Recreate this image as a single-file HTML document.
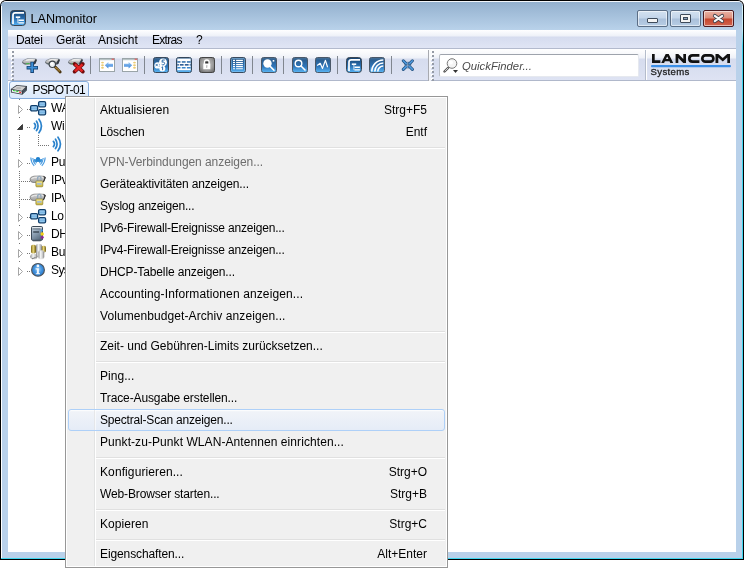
<!DOCTYPE html>
<html><head><meta charset="utf-8">
<style>
*{margin:0;padding:0;box-sizing:border-box}
html,body{will-change:transform;width:744px;height:568px;overflow:hidden;background:#fff;font-family:"Liberation Sans",sans-serif;position:relative}
.a{position:absolute}
.t{position:absolute;white-space:nowrap;color:#000;line-height:1}
#win{left:0;top:0;width:744px;height:560px;background:#000;border-radius:6px 6px 0 0}
#frame{left:1px;top:1px;width:742px;height:558px;border-radius:5px 5px 0 0;background:#b9d1ea;border-top:1px solid #f2f6fb}
#title{left:1px;top:2px;width:741px;height:28px;border-radius:4px 4px 0 0;background:linear-gradient(#93b0ce,#b9d2ea)}
#cyanb{left:1px;top:558px;width:742px;height:1px;background:#3fd6ef}
#cyanr{left:742px;top:6px;width:1px;height:553px;background:linear-gradient(#d8f4fb 0,#bfeefa 24px,#3fd6ef 40px)}
#menubar{left:8px;top:30px;width:728px;height:19px;background:linear-gradient(#ffffff 0,#f9fafd 2px,#eef1f8 6px,#d6dcef 7px,#dae0f1 12px,#e0e5f4 18px);border-bottom:1px solid #b3bacd}
#toolbar{left:8px;top:49px;width:728px;height:32px;background:linear-gradient(#ffffff 0,#f7f8fb 5px,#eef1f8 9px,#d6dcee 10px,#d9dff0 20px,#dee3f3 31px);border-bottom:1px solid #b0b8cb}
#tree{left:8px;top:81px;width:728px;height:471px;background:#fff}
.btn{position:absolute;top:10px;height:17px;border-radius:2px;border:1px solid #5b6e86;box-shadow:inset 0 0 0 1px rgba(255,255,255,.55)}
.mi{position:absolute;left:100px;font-size:12px;line-height:1;white-space:nowrap;color:#000}
.sc{position:absolute;font-size:12px;line-height:1;white-space:nowrap;color:#000;right:317px}
.sep{position:absolute;left:96px;width:349px;height:2px;border-top:1px solid #e0e0e0;border-bottom:1px solid #fff}
.tr{position:absolute;font-size:12px;letter-spacing:-0.3px;line-height:1;white-space:nowrap;color:#000;left:51px}
</style></head><body>
<div class="a" id="win"></div>
<div class="a" id="frame"></div>
<div class="a" id="title"></div>
<div class="a" id="cyanb"></div>
<div class="a" style="left:1px;top:6px;width:1px;height:552px;background:#fff"></div>
<div class="a" id="cyanr"></div>

<!-- app icon -->
<svg class="a" style="left:10px;top:10px" width="16" height="16" viewBox="0 0 16 16">
<defs><linearGradient id="ig" x1="0" y1="0" x2="0" y2="1"><stop offset="0" stop-color="#16406d"/><stop offset=".55" stop-color="#2a6fb0"/><stop offset="1" stop-color="#56b4f6"/></linearGradient></defs>
<rect x="0.5" y="0.5" width="15" height="15" rx="3" fill="url(#ig)" stroke="#3b4652"/>
<path d="M3 14V5Q3 2.8 5.2 2.8H14" stroke="#fff" stroke-width="1.7" fill="none"/>
<path d="M5.8 7.2H10.2" stroke="#fff" stroke-width="1.6"/><path d="M7.9 7.5V12.9H9M7.9 10.2H9" stroke="#dce9f5" stroke-width=".9" fill="none"/><path d="M9 10.2H13.9M9 12.9H13.9" stroke="#fff" stroke-width="1.4"/>
</svg>
<div class="t" style="left:30.5px;top:12.6px;font-size:12.6px">LANmonitor</div>

<!-- caption buttons -->
<div class="btn" style="left:637px;width:31px;background:linear-gradient(#d3e1f0 0,#c3d5ea 7px,#aac0da 8px,#b9cfe6 16px)"></div>
<div class="a" style="left:647px;top:18px;width:11px;height:5px;background:#f4f4f4;border:1px solid #3e4b5b;border-radius:1px"></div>
<div class="btn" style="left:670px;width:31px;background:linear-gradient(#d3e1f0 0,#c3d5ea 7px,#aac0da 8px,#b9cfe6 16px)"></div>
<div class="a" style="left:680px;top:14px;width:11px;height:9px;background:#f4f4f4;border:1px solid #3e4b5b;border-radius:1px"></div>
<div class="a" style="left:683px;top:17px;width:5px;height:3px;background:#8aa2ba;border:1px solid #3e4b5b"></div>
<div class="btn" style="left:703px;width:31px;border-color:#4a1a20;background:linear-gradient(#eab3a5 0,#dc8d7a 7px,#c5462d 8px,#d36a55 16px)"></div>
<svg class="a" style="left:712px;top:13px" width="13" height="11" viewBox="0 0 13 11">
<path d="M2.8 2.8L10.2 8.2M10.2 2.8L2.8 8.2" stroke="#3b3d48" stroke-width="3.8" stroke-linecap="round"/>
<path d="M2.8 2.8L10.2 8.2M10.2 2.8L2.8 8.2" stroke="#f6f6f6" stroke-width="2.2" stroke-linecap="round"/>
</svg>
<!-- menubar -->
<div class="a" id="menubar"></div>
<div class="t" style="left:16px;top:34px;font-size:12px;letter-spacing:-0.3px">Datei</div>
<div class="t" style="left:56px;top:34px;font-size:12px;letter-spacing:-0.2px">Gerät</div>
<div class="t" style="left:98px;top:34px;font-size:12px;letter-spacing:0.1px">Ansicht</div>
<div class="t" style="left:152px;top:34px;font-size:12px;letter-spacing:-0.7px">Extras</div>
<div class="t" style="left:196px;top:34px;font-size:12px">?</div>

<!-- toolbar -->
<div class="a" id="toolbar"></div>

<!-- toolbar 1 end / gap -->
<div class="a" style="left:428px;top:50px;width:1px;height:31px;background:#a8aab0"></div>
<div class="a" style="left:429px;top:49px;width:2px;height:32px;background:linear-gradient(#fbfcfd,#eef0f7)"></div>
<div class="a" style="left:645px;top:50px;width:1px;height:30px;background:#b4bccb"></div>
<div class="a" style="left:646px;top:50px;width:1px;height:30px;background:#fff"></div>
<!-- grips -->
<svg class="a" style="left:11px;top:50px" width="4" height="32" shape-rendering="crispEdges"><g fill="#fff"><rect x="0" y="0" width="2" height="2"/><rect x="0" y="4" width="2" height="2"/><rect x="0" y="8" width="2" height="2"/><rect x="0" y="12" width="2" height="2"/><rect x="0" y="16" width="2" height="2"/><rect x="0" y="20" width="2" height="2"/><rect x="0" y="24" width="2" height="2"/><rect x="0" y="28" width="2" height="2"/></g><g fill="#959ba6"><rect x="1" y="1" width="2" height="2"/><rect x="1" y="5" width="2" height="2"/><rect x="1" y="9" width="2" height="2"/><rect x="1" y="13" width="2" height="2"/><rect x="1" y="17" width="2" height="2"/><rect x="1" y="21" width="2" height="2"/><rect x="1" y="25" width="2" height="2"/><rect x="1" y="29" width="2" height="2"/></g></svg>
<svg class="a" style="left:431px;top:50px" width="4" height="32" shape-rendering="crispEdges"><g fill="#fff"><rect x="0" y="0" width="2" height="2"/><rect x="0" y="4" width="2" height="2"/><rect x="0" y="8" width="2" height="2"/><rect x="0" y="12" width="2" height="2"/><rect x="0" y="16" width="2" height="2"/><rect x="0" y="20" width="2" height="2"/><rect x="0" y="24" width="2" height="2"/><rect x="0" y="28" width="2" height="2"/></g><g fill="#959ba6"><rect x="1" y="1" width="2" height="2"/><rect x="1" y="5" width="2" height="2"/><rect x="1" y="9" width="2" height="2"/><rect x="1" y="13" width="2" height="2"/><rect x="1" y="17" width="2" height="2"/><rect x="1" y="21" width="2" height="2"/><rect x="1" y="25" width="2" height="2"/><rect x="1" y="29" width="2" height="2"/></g></svg>
<!-- separators -->
<div class="a" style="left:90px;top:56px;width:1px;height:18px;background:#80868f"></div>
<div class="a" style="left:144px;top:56px;width:1px;height:18px;background:#80868f"></div>
<div class="a" style="left:221px;top:56px;width:1px;height:18px;background:#80868f"></div>
<div class="a" style="left:252px;top:56px;width:1px;height:18px;background:#80868f"></div>
<div class="a" style="left:283px;top:56px;width:1px;height:18px;background:#80868f"></div>
<div class="a" style="left:337px;top:56px;width:1px;height:18px;background:#80868f"></div>
<div class="a" style="left:391px;top:56px;width:1px;height:18px;background:#80868f"></div>

<svg width="0" height="0" style="position:absolute"><defs>
<linearGradient id="bg" x1="0" y1="0" x2="0" y2="1"><stop offset="0" stop-color="#4a7196"/><stop offset=".18" stop-color="#2b5f92"/><stop offset=".6" stop-color="#2f76ba"/><stop offset="1" stop-color="#5cb8f6"/></linearGradient>
<linearGradient id="gg" x1="0" y1="0" x2="0" y2="1"><stop offset="0" stop-color="#8a8a8a"/><stop offset=".5" stop-color="#6c6c6c"/><stop offset="1" stop-color="#9a9a9a"/></linearGradient>
<linearGradient id="lkd" x1="0" y1="0" x2="0" y2="1"><stop offset="0" stop-color="#dcdcdc"/><stop offset="1" stop-color="#9c9c9c"/></linearGradient><linearGradient id="lky" x1="0" y1="0" x2="0" y2="1"><stop offset="0" stop-color="#f6eea0"/><stop offset="1" stop-color="#c9b336"/></linearGradient>
<linearGradient id="dev" x1="0" y1="0" x2="0" y2="1"><stop offset="0" stop-color="#e6e6e6"/><stop offset="1" stop-color="#a9a9a9"/></linearGradient>
</defs></svg>

<!-- icon 1: device + plus -->
<svg class="a" style="left:20px;top:55px" width="20" height="20" viewBox="0 0 20 20">
<path d="M2 7Q2.3 5 7.4 3.2L15.5 3.5Q17.3 3.8 16.9 5L15.6 8.5Q15 9.4 13 9.5L6 9.7Q2 9.4 2 7Z" fill="#8e959c"/>
<path d="M3 6.6Q3.8 5 7.9 4L15.2 4.2Q16.1 4.4 15.5 5.3L13.4 7.8L5.2 8.3Q3 8 3 6.6Z" fill="url(#dev)"/>
<path d="M6 5.3Q9 4.6 13.5 4.9" stroke="#fafafa" stroke-width=".8" fill="none"/>
<path d="M15.6 4L16.9 5L15.6 8.5Q15 9.4 13 9.5L13.4 7.8Z" fill="#343a42"/>
<path d="M2.5 7.2Q3 8.8 6 9" stroke="#4d545c" stroke-width=".7" fill="none"/>
<path d="M5.8 8.8L9.5 8.6" stroke="#34b834" stroke-width=".9"/>
<path d="M6.6 12.7H18M12.15 6.8V17.9" stroke="#174575" stroke-width="3.6"/>
<path d="M7.4 12.7H17.2M12.15 7.6V17.1" stroke="#3d8fd8" stroke-width="1.8"/>
</svg>
<!-- icon 2: device + magnifier -->
<svg class="a" style="left:43px;top:55px" width="20" height="20" viewBox="0 0 20 20">
<path d="M2 7Q2.3 5 7.4 3.2L15.5 3.5Q17.3 3.8 16.9 5L15.6 8.5Q15 9.4 13 9.5L6 9.7Q2 9.4 2 7Z" fill="#8e959c"/>
<path d="M3 6.6Q3.8 5 7.9 4L15.2 4.2Q16.1 4.4 15.5 5.3L13.4 7.8L5.2 8.3Q3 8 3 6.6Z" fill="url(#dev)"/>
<path d="M6 5.3Q9 4.6 13.5 4.9" stroke="#fafafa" stroke-width=".8" fill="none"/>
<path d="M15.6 4L16.9 5L15.6 8.5Q15 9.4 13 9.5L13.4 7.8Z" fill="#343a42"/>
<path d="M2.5 7.2Q3 8.8 6 9" stroke="#4d545c" stroke-width=".7" fill="none"/>
<path d="M5.8 8.8L9.5 8.6" stroke="#34b834" stroke-width=".9"/>
<path d="M12.3 12L17.2 17" stroke="#4a3410" stroke-width="2.8" stroke-linecap="round"/>
<path d="M12.5 12.2L17 16.8" stroke="#d8a848" stroke-width="1.4" stroke-dasharray="1 .6"/>
<circle cx="9.3" cy="9.3" r="3.2" fill="#eef2f5" stroke="#3c4248" stroke-width="1.2"/>
<circle cx="8.8" cy="8.7" r="1.3" fill="#fff"/>
</svg>
<!-- icon 3: device + red x -->
<svg class="a" style="left:66px;top:55px" width="20" height="20" viewBox="0 0 20 20">
<path d="M2 7Q2.3 5 7.4 3.2L15.5 3.5Q17.3 3.8 16.9 5L15.6 8.5Q15 9.4 13 9.5L6 9.7Q2 9.4 2 7Z" fill="#8e959c"/>
<path d="M3 6.6Q3.8 5 7.9 4L15.2 4.2Q16.1 4.4 15.5 5.3L13.4 7.8L5.2 8.3Q3 8 3 6.6Z" fill="url(#dev)"/>
<path d="M6 5.3Q9 4.6 13.5 4.9" stroke="#fafafa" stroke-width=".8" fill="none"/>
<path d="M15.6 4L16.9 5L15.6 8.5Q15 9.4 13 9.5L13.4 7.8Z" fill="#343a42"/>
<path d="M2.5 7.2Q3 8.8 6 9" stroke="#4d545c" stroke-width=".7" fill="none"/>
<path d="M5.8 8.8L9.5 8.6" stroke="#34b834" stroke-width=".9"/>
<path d="M8.6 9L16.8 16.6M16.8 9L8.6 16.6" stroke="#6d0c0c" stroke-width="3.8" stroke-linecap="round"/>
<path d="M8.9 9.3L16.5 16.3M16.5 9.3L8.9 16.3" stroke="#e52424" stroke-width="2.3"/>
</svg>
<!-- icon 4: window arrow left -->
<svg class="a" style="left:99px;top:58px" width="16" height="14" viewBox="0 0 16 14">
<defs><linearGradient id="arr" x1="0" y1="0" x2="0" y2="1"><stop offset="0" stop-color="#9ccaf6"/><stop offset="1" stop-color="#3a82d8"/></linearGradient></defs>
<rect x="0.5" y="0.5" width="15" height="13" fill="#fff" stroke="#9aa4a8"/>
<rect x="1" y="1" width="14" height="1.2" fill="#b8c4c6"/>
<rect x="12.6" y="0.6" width="2.6" height="1.3" fill="#dd6a6a"/>
<ellipse cx="3.5" cy="4.6" rx="1.4" ry=".95" fill="#ebcb74"/><ellipse cx="3.5" cy="7.2" rx="1.4" ry=".95" fill="#ebcb74"/><ellipse cx="3.5" cy="9.8" rx="1.4" ry=".95" fill="#ebcb74"/>
<path d="M5.8 7.2L9.4 4V5.7H14V8.7H9.4V10.4Z" fill="url(#arr)"/>
</svg>
<!-- icon 5: window arrow right -->
<svg class="a" style="left:122px;top:58px" width="16" height="14" viewBox="0 0 16 14">
<rect x="0.5" y="0.5" width="15" height="13" fill="#fff" stroke="#9aa4a8"/>
<rect x="1" y="1" width="14" height="1.2" fill="#b8c4c6"/>
<rect x="12.6" y="0.6" width="2.6" height="1.3" fill="#dd6a6a"/>
<ellipse cx="12.5" cy="4.6" rx="1.4" ry=".95" fill="#ebcb74"/><ellipse cx="12.5" cy="7.2" rx="1.4" ry=".95" fill="#ebcb74"/><ellipse cx="12.5" cy="9.8" rx="1.4" ry=".95" fill="#ebcb74"/>
<path d="M10.2 7.2L6.6 4V5.7H2V8.7H6.6V10.4Z" fill="url(#arr)"/>
</svg>
<!-- icon 6: numbers -->
<svg class="a" style="left:153px;top:57px" width="16" height="16" viewBox="0 0 16 16">
<rect x="0.5" y="0.5" width="15" height="15" rx="2" fill="url(#bg)" stroke="#3a4a5c"/>
<circle cx="10" cy="5.3" r="3.9" fill="#fff"/><circle cx="4.6" cy="8.4" r="3.2" fill="#fff"/><circle cx="9.3" cy="11.4" r="3" fill="#fff"/><path d="M5 6.5L9 5L11 9.5L7 11Z" fill="#fff"/>
<path d="M11.8 3H9.3L9 5.3Q9.6 4.9 10.3 5Q11.7 5.2 11.6 6.5Q11.5 7.9 10 7.9Q9.2 7.9 8.7 7.4" stroke="#2466a8" stroke-width=".95" fill="none"/>
<path d="M8.5 10.4L9.6 9.8V13.2" stroke="#2466a8" stroke-width=".95" fill="none"/>
<path d="M2.6 6.8L4.8 9.2M4.8 6.8L2.6 9.2" stroke="#2466a8" stroke-width=".8"/>
<circle cx="6.3" cy="7.2" r=".45" fill="#2466a8"/><circle cx="6.3" cy="9" r=".45" fill="#2466a8"/>
</svg>
<!-- icon 7: firewall -->
<svg class="a" style="left:176px;top:57px" width="16" height="16" viewBox="0 0 16 16">
<rect x="0.5" y="0.5" width="15" height="15" rx="2" fill="url(#bg)" stroke="#34475a"/>
<rect x="1.3" y="1.6" width="13.4" height="11.6" fill="#fff"/>
<g fill="#2c6aa8"><rect x="1.3" y="4.2" width="3.2" height="1.5"/><rect x="5.8" y="4.2" width="3.8" height="1.5"/><rect x="10.9" y="4.2" width="3.8" height="1.5"/>
<rect x="1.3" y="7.1" width="1.5" height="1.5" fill="#1a4f8c"/><rect x="3.8" y="7.1" width="3.8" height="1.5" fill="#1a4f8c"/><rect x="8.8" y="7.1" width="3.8" height="1.5" fill="#1a4f8c"/><rect x="13.7" y="7.1" width="1" height="1.5" fill="#1a4f8c"/>
<rect x="1.3" y="10" width="3.2" height="1.5" fill="#3a86cc"/><rect x="5.8" y="10" width="3.8" height="1.5" fill="#3a86cc"/><rect x="10.9" y="10" width="3.8" height="1.5" fill="#3a86cc"/></g>
</svg>
<!-- icon 8: lock -->
<svg class="a" style="left:199px;top:57px" width="16" height="16" viewBox="0 0 16 16">
<defs><radialGradient id="gg2" cx=".5" cy=".45" r=".7"><stop offset="0" stop-color="#c8c8c8"/><stop offset=".6" stop-color="#9a9a9a"/><stop offset="1" stop-color="#5e5e5e"/></radialGradient></defs>
<rect x="0.5" y="0.5" width="15" height="15" rx="2" fill="url(#gg2)" stroke="#454545"/>
<path d="M5.6 7V5.3Q5.6 3.1 7.8 3.1Q10 3.1 10 5.3V7" stroke="#fff" stroke-width="1.5" fill="none"/>
<rect x="6.3" y="4.5" width="3" height="2.3" fill="#333"/>
<rect x="4.3" y="6.6" width="7" height="5.6" fill="#fff"/>
<path d="M7.4 8.3H8.3L8.1 11H7.6Z" fill="#888"/>
</svg>
<!-- icon 9: list -->
<svg class="a" style="left:230px;top:57px" width="16" height="16" viewBox="0 0 16 16">
<rect x="0.5" y="0.5" width="15" height="15" rx="2" fill="url(#bg)" stroke="#3a4a5c"/>
<rect x="1.5" y="1.5" width="13" height="13" rx="1" fill="none" stroke="#8cc4ee" stroke-opacity=".5"/>
<g fill="#fff"><rect x="3" y="2.8" width="2" height="1.2"/><rect x="3" y="4.9" width="2" height="1.2"/><rect x="3" y="7" width="2" height="1.2"/><rect x="3" y="9" width="2" height="1.2"/><rect x="3" y="11.1" width="2" height="1.2" opacity=".8"/>
<rect x="6.1" y="2.8" width="6.8" height="1.2"/><rect x="6.1" y="4.9" width="6.8" height="1.2"/><rect x="6.1" y="7" width="6.8" height="1.2"/><rect x="6.1" y="9" width="6.8" height="1.2"/><rect x="6.1" y="11.1" width="6.8" height="1.2" opacity=".8"/></g>
</svg>
<!-- icon 10: magnifier filled -->
<svg class="a" style="left:261px;top:57px" width="16" height="16" viewBox="0 0 16 16">
<rect x="0.5" y="0.5" width="15" height="15" rx="2" fill="url(#bg)" stroke="#4a5868"/>
<path d="M9.4 9.6L13 13.3" stroke="#fff" stroke-width="1.6" stroke-linecap="round"/>
<circle cx="6.5" cy="6.5" r="4.2" fill="#fff"/>
<rect x="11.7" y="3" width="1.6" height="1.6" fill="#fff"/>
</svg>
<!-- icon 11: search -->
<svg class="a" style="left:292px;top:57px" width="16" height="16" viewBox="0 0 16 16">
<rect x="0.5" y="0.5" width="15" height="15" rx="2" fill="url(#bg)" stroke="#4a5868"/>
<circle cx="6.5" cy="6.5" r="3.3" fill="none" stroke="#fff" stroke-width="1.4"/>
<path d="M9 9L13 13" stroke="#fff" stroke-width="1.6" stroke-linecap="round"/>
</svg>
<!-- icon 12: wave -->
<svg class="a" style="left:315px;top:57px" width="16" height="16" viewBox="0 0 16 16">
<rect x="0.5" y="0.5" width="15" height="15" rx="2" fill="url(#bg)" stroke="#4a5868"/>
<path d="M2.2 8.6L5.2 6.3L7.5 11.4L10.4 3.4L12.6 10.2" stroke="#fff" stroke-width="1.2" fill="none" stroke-linejoin="round"/>
</svg>
<!-- icon 13: app -->
<svg class="a" style="left:346px;top:57px" width="16" height="16" viewBox="0 0 16 16">
<rect x="0.5" y="0.5" width="15" height="15" rx="3" fill="url(#ig)" stroke="#3b4652"/>
<path d="M3 14V5Q3 2.8 5.2 2.8H14" stroke="#fff" stroke-width="1.7" fill="none"/>
<path d="M5.8 7.2H10.2" stroke="#fff" stroke-width="1.6"/><path d="M7.9 7.5V12.9H9M7.9 10.2H9" stroke="#dce9f5" stroke-width=".9" fill="none"/><path d="M9 10.2H13.9M9 12.9H13.9" stroke="#fff" stroke-width="1.4"/>
</svg>
<!-- icon 14: wifi arcs -->
<svg class="a" style="left:369px;top:57px" width="16" height="16" viewBox="0 0 16 16">
<rect x="0.5" y="0.5" width="15" height="15" rx="2" fill="url(#bg)" stroke="#4a5868"/>
<path d="M2.8 14.5A11.5 11.5 0 0 1 14.3 3M5.8 14.5A8.5 8.5 0 0 1 14.3 6M8.8 14.5A5.5 5.5 0 0 1 14.3 9" stroke="#fff" stroke-width="1.6" fill="none"/>
</svg>
<!-- icon 15: collapse X -->
<svg class="a" style="left:401px;top:59px" width="14" height="13" viewBox="0 0 14 13">
<g stroke="#25527e" stroke-width="3" stroke-linecap="round"><path d="M2.3 1.8L4.6 4.1M11.4 1.8L9.1 4.1M2.3 10.4L4.6 8.1M11.4 10.4L9.1 8.1"/></g>
<g fill="#25527e"><path d="M6.6 5.9L3.2 5.7L6.4 2.5Z"/><path d="M7.1 5.9L10.5 5.7L7.3 2.5Z"/><path d="M6.6 6.3L3.2 6.5L6.4 9.7Z"/><path d="M7.1 6.3L10.5 6.5L7.3 9.7Z"/></g>
<g stroke="#4f9be0" stroke-width="1.5" stroke-linecap="round"><path d="M2.3 1.8L4.8 4.3M11.4 1.8L8.9 4.3M2.3 10.4L4.8 7.9M11.4 10.4L8.9 7.9"/></g>
<g fill="#4f9be0"><path d="M6.2 5.5L4.2 5.3L6 3.5Z"/><path d="M7.5 5.5L9.5 5.3L7.7 3.5Z"/><path d="M6.2 6.7L4.2 6.9L6 8.7Z"/><path d="M7.5 6.7L9.5 6.9L7.7 8.7Z"/></g>
</svg>
<!-- search box -->
<div class="a" style="left:439px;top:54px;width:200px;height:23px;background:#fff;border:1px solid #b9bec6;border-top-color:#9ea3ac;border-radius:2px;border-right-color:#e6e9ef;border-bottom-color:#e6e9ef"></div>
<svg class="a" style="left:443px;top:57px" width="18" height="18" viewBox="0 0 18 18">
<path d="M5 11L1.5 14.5" stroke="#555" stroke-width="2.4" stroke-linecap="round"/>
<path d="M5 11L1.8 14.2" stroke="#cfcfcf" stroke-width="1"/>
<circle cx="9" cy="6.5" r="4.8" fill="#f4f4f4" stroke="#7a7a7a" stroke-width="1"/>
<circle cx="8" cy="5.5" r="2" fill="#fff"/>
<path d="M10 13H15L12.5 16Z" fill="#333"/>
</svg>
<div class="t" style="left:462px;top:61px;font-size:11.3px;font-style:italic;color:#4a4a4a">QuickFinder...</div>

<!-- logo -->
<svg class="a" style="left:651px;top:53px" width="80" height="15" viewBox="0 0 80 15">
<g fill="#111">
<path d="M1 1H3.7V7.3H9.4V10H1Z"/>
<path fill-rule="evenodd" d="M10.2 10L14.7 1H17.7L22.2 10H19.3L18.5 8.3H13.9L13.1 10ZM15 5.9H17.4L16.2 3.4Z"/>
<path d="M24.6 10V1H27.3L32.3 6.1V1H35V10H32.3L27.3 4.9V10Z"/>
<path d="M64.5 10V1H67.3L71.75 4.9L76.2 1H79V10H76.3V4.6L71.75 8.4L67.3 4.6V10Z"/>
</g>
<g fill="none" stroke="#111" stroke-width="2.7">
<path d="M48.4 2.35H41.6Q38.35 2.35 38.35 5.5Q38.35 8.65 41.6 8.65H48.4"/>
<rect x="51.35" y="2.35" width="11" height="6.3" rx="3"/>
</g>
<rect x="0" y="12" width="80" height="2.2" rx="1" fill="#3c8fe8"/>
</svg>
<div class="t" style="left:650.5px;top:67px;font-size:9.6px;color:#222;-webkit-text-stroke:0.3px #222;letter-spacing:0.35px">Systems</div>


<!-- tree -->
<div class="a" id="tree"></div>
<!-- selection -->
<div class="a" style="left:9px;top:81px;width:80px;height:18px;border:1px solid #84acdd;border-radius:3px;background:linear-gradient(#f1f7fe,#dbe9fb)"></div>
<!-- PSPOT device icon -->
<svg class="a" style="left:9px;top:82px" width="20" height="16" viewBox="0 0 20 16">
<path d="M1.8 7L7.5 3L18 4L17.8 8.6L13.3 12.8L1.9 10.6Z" fill="#343a42"/>
<path d="M2.9 7.1L7.9 3.8L16.9 4.7L12.9 8.8Z" fill="#d2d2d2"/>
<ellipse cx="9.6" cy="6.2" rx="2.6" ry="1.1" fill="#b9b9b9"/>
<path d="M2.8 7.7L12.8 9.4V11.8L2.8 9.9Z" fill="#e9ecef"/>
<path d="M4 8L6.2 8.4V9.3L4 8.9Z" fill="#1fd61f"/>
<path d="M6.9 8.7L9.3 9.1V10L6.9 9.6Z" fill="#1fd61f"/>
<path d="M10 9.6L12.1 10V10.9L10 10.5Z" fill="#ee1010"/>
<path d="M13.8 9.5L16.5 7M14 11L17 8.4" stroke="#6d8aa4" stroke-width=".5"/>
</svg>
<div class="t" style="left:32.5px;top:83.6px;font-size:12px;letter-spacing:-0.6px">PSPOT-01</div>

<!-- tree lines -->
<svg class="a" style="left:8px;top:98px" width="60" height="180" shape-rendering="crispEdges">
<g fill="#747474">
<rect x="11" y="1" width="1" height="1"/>
<rect x="11" y="19" width="1" height="1"/>
<rect x="11" y="37" width="1" height="1"/>
<rect x="11" y="39" width="1" height="1"/>
<rect x="11" y="41" width="1" height="1"/>
<rect x="11" y="43" width="1" height="1"/>
<rect x="11" y="45" width="1" height="1"/>
<rect x="11" y="47" width="1" height="1"/>
<rect x="11" y="49" width="1" height="1"/>
<rect x="11" y="51" width="1" height="1"/>
<rect x="11" y="53" width="1" height="1"/>
<rect x="11" y="55" width="1" height="1"/>
<rect x="11" y="73" width="1" height="1"/>
<rect x="11" y="75" width="1" height="1"/>
<rect x="11" y="77" width="1" height="1"/>
<rect x="11" y="79" width="1" height="1"/>
<rect x="11" y="81" width="1" height="1"/>
<rect x="11" y="83" width="1" height="1"/>
<rect x="11" y="85" width="1" height="1"/>
<rect x="11" y="87" width="1" height="1"/>
<rect x="11" y="89" width="1" height="1"/>
<rect x="11" y="91" width="1" height="1"/>
<rect x="11" y="93" width="1" height="1"/>
<rect x="11" y="95" width="1" height="1"/>
<rect x="11" y="97" width="1" height="1"/>
<rect x="11" y="99" width="1" height="1"/>
<rect x="11" y="101" width="1" height="1"/>
<rect x="11" y="103" width="1" height="1"/>
<rect x="11" y="105" width="1" height="1"/>
<rect x="11" y="107" width="1" height="1"/>
<rect x="11" y="109" width="1" height="1"/>
<rect x="11" y="127" width="1" height="1"/>
<rect x="11" y="145" width="1" height="1"/>
<rect x="11" y="163" width="1" height="1"/>
<rect x="19" y="11" width="1" height="1"/>
<rect x="21" y="11" width="1" height="1"/>
<rect x="19" y="29" width="1" height="1"/>
<rect x="21" y="29" width="1" height="1"/>
<rect x="19" y="65" width="1" height="1"/>
<rect x="21" y="65" width="1" height="1"/>
<rect x="19" y="119" width="1" height="1"/>
<rect x="21" y="119" width="1" height="1"/>
<rect x="19" y="137" width="1" height="1"/>
<rect x="21" y="137" width="1" height="1"/>
<rect x="19" y="155" width="1" height="1"/>
<rect x="21" y="155" width="1" height="1"/>
<rect x="19" y="173" width="1" height="1"/>
<rect x="21" y="173" width="1" height="1"/>
<rect x="11" y="83" width="1" height="1"/>
<rect x="13" y="83" width="1" height="1"/>
<rect x="15" y="83" width="1" height="1"/>
<rect x="17" y="83" width="1" height="1"/>
<rect x="19" y="83" width="1" height="1"/>
<rect x="21" y="83" width="1" height="1"/>
<rect x="11" y="101" width="1" height="1"/>
<rect x="13" y="101" width="1" height="1"/>
<rect x="15" y="101" width="1" height="1"/>
<rect x="17" y="101" width="1" height="1"/>
<rect x="19" y="101" width="1" height="1"/>
<rect x="21" y="101" width="1" height="1"/>
<rect x="30" y="37" width="1" height="1"/>
<rect x="30" y="39" width="1" height="1"/>
<rect x="30" y="41" width="1" height="1"/>
<rect x="30" y="43" width="1" height="1"/>
<rect x="30" y="45" width="1" height="1"/>
<rect x="30" y="47" width="1" height="1"/>
<rect x="32" y="47" width="1" height="1"/>
<rect x="34" y="47" width="1" height="1"/>
<rect x="36" y="47" width="1" height="1"/>
<rect x="38" y="47" width="1" height="1"/>
<rect x="40" y="47" width="1" height="1"/></g><path d="M10.5 7.5V15.5L14.5 11.5Z" fill="#fff" stroke="#a6a6a6" stroke-width="1" shape-rendering="auto"/><path d="M10.5 61.5V69.5L14.5 65.5Z" fill="#fff" stroke="#a6a6a6" stroke-width="1" shape-rendering="auto"/><path d="M10.5 115.5V123.5L14.5 119.5Z" fill="#fff" stroke="#a6a6a6" stroke-width="1" shape-rendering="auto"/><path d="M10.5 133.5V141.5L14.5 137.5Z" fill="#fff" stroke="#a6a6a6" stroke-width="1" shape-rendering="auto"/><path d="M10.5 151.5V159.5L14.5 155.5Z" fill="#fff" stroke="#a6a6a6" stroke-width="1" shape-rendering="auto"/><path d="M10.5 169.5V177.5L14.5 173.5Z" fill="#fff" stroke="#a6a6a6" stroke-width="1" shape-rendering="auto"/><path d="M9.5 31.5H14.5V26.5Z" fill="#3c3c3c" stroke="#262626" stroke-width=".8" shape-rendering="auto"/></svg>
<!-- WAN network icon -->
<svg class="a" style="left:29px;top:100px" width="18" height="16" viewBox="0 0 18 16">
<defs><linearGradient id="nb" x1="0" y1="0" x2="0" y2="1"><stop offset="0" stop-color="#a6d4f6"/><stop offset=".6" stop-color="#7ab4e2"/><stop offset=".85" stop-color="#9fd4f4"/><stop offset="1" stop-color="#d2f4ff"/></linearGradient></defs>
<rect x="1.6" y="5.6" width="7" height="5.2" rx="1.3" fill="url(#nb)" stroke="#0f3e6c" stroke-width="1.3"/>
<rect x="9.6" y="1.6" width="7" height="5.2" rx="1.3" fill="url(#nb)" stroke="#0f3e6c" stroke-width="1.3"/>
<rect x="9.6" y="9.6" width="7" height="5.2" rx="1.3" fill="url(#nb)" stroke="#0f3e6c" stroke-width="1.3"/>
</svg>
<div class="tr" style="top:102px">WAN-Verbindungen</div>
<!-- wifi icon -->
<svg class="a" style="left:32px;top:118px" width="12" height="16" viewBox="0 0 12 16">
<path d="M2.4 5.4Q4.6 8 2.4 10.6M4.5 3.2Q7.6 8 4.5 12.6M7 1.2Q11.9 8 7 14.8" stroke="#2a82cc" stroke-width="1.7" fill="none" stroke-linecap="round"/>
</svg>
<div class="tr" style="top:120px">Wireless LAN</div>
<svg class="a" style="left:51px;top:136px" width="12" height="16" viewBox="0 0 12 16">
<path d="M2.4 5.4Q4.6 8 2.4 10.6M4.5 3.2Q7.6 8 4.5 12.6M7 1.2Q11.9 8 7 14.8" stroke="#2a82cc" stroke-width="1.7" fill="none" stroke-linecap="round"/>
</svg>
<!-- public spot -->
<svg class="a" style="left:28px;top:154px" width="20" height="16" viewBox="0 0 20 16">
<g fill="none" stroke="#4a9be0" stroke-width="1.1">
<path d="M2.8 3.5Q3 8.5 6.2 12"/><path d="M4.8 4Q5 7.8 7.6 10.6"/><path d="M6.6 5Q7 7.5 8.6 9"/>
<path d="M17.2 3.5Q17 8.5 13.8 12"/><path d="M15.2 4Q15 7.8 12.4 10.6"/><path d="M13.4 5Q13 7.5 11.4 9"/>
</g>
<path d="M7.8 7.8V5.2Q7.8 3 10 3Q12.2 3 12.2 5.2V7.8Z" fill="#1f7fcc"/>
<path d="M6 5.3H14V7.8H6Z" fill="#2a88d2" opacity=".8"/>
</svg>
<div class="tr" style="top:156px">Public Spot</div>
<!-- IPv locks -->
<svg class="a" style="left:28px;top:172px" width="20" height="18" viewBox="0 0 20 18">
<path d="M2 7Q2.3 4.8 6 4.2L12 4Q17 4 17.2 5.5L16 8.8Q15 10.3 12 10.5L5 10.5Q2 10.2 2 7Z" fill="url(#lkd)" stroke="#6f6f6f" stroke-width=".7"/>
<path d="M3.5 6.5Q6 5 11 5Q14 5 16 5.5" stroke="#f2f2f2" stroke-width=".9" fill="none"/>
<path d="M15.5 4.5L17.2 5.5L16 8.8Q15 10.3 13 10.5" stroke="#333" stroke-width="1.2" fill="none"/>
<path d="M9.6 9.5V6.6Q9.6 4.4 11.3 4.4Q13 4.4 13 6.6V9.5" stroke="#93a8bb" stroke-width="1.3" fill="none"/>
<rect x="7.9" y="9" width="6.9" height="5.8" rx=".8" fill="url(#lky)" stroke="#8d7d25" stroke-width=".7"/>
<rect x="9" y="11" width="4.6" height="1.8" rx=".6" fill="#a5bcd2"/>
</svg>
<div class="tr" style="top:174px">IPv4</div>
<svg class="a" style="left:28px;top:190px" width="20" height="18" viewBox="0 0 20 18">
<path d="M2 7Q2.3 4.8 6 4.2L12 4Q17 4 17.2 5.5L16 8.8Q15 10.3 12 10.5L5 10.5Q2 10.2 2 7Z" fill="url(#lkd)" stroke="#6f6f6f" stroke-width=".7"/>
<path d="M3.5 6.5Q6 5 11 5Q14 5 16 5.5" stroke="#f2f2f2" stroke-width=".9" fill="none"/>
<path d="M15.5 4.5L17.2 5.5L16 8.8Q15 10.3 13 10.5" stroke="#333" stroke-width="1.2" fill="none"/>
<path d="M9.6 9.5V6.6Q9.6 4.4 11.3 4.4Q13 4.4 13 6.6V9.5" stroke="#93a8bb" stroke-width="1.3" fill="none"/>
<rect x="7.9" y="9" width="6.9" height="5.8" rx=".8" fill="url(#lky)" stroke="#8d7d25" stroke-width=".7"/>
<rect x="9" y="11" width="4.6" height="1.8" rx=".6" fill="#a5bcd2"/>
</svg>
<div class="tr" style="top:192px">IPv6</div>
<!-- LAN network icon -->
<svg class="a" style="left:29px;top:208px" width="18" height="16" viewBox="0 0 18 16">
<rect x="1.6" y="5.6" width="7" height="5.2" rx="1.3" fill="url(#nb)" stroke="#0f3e6c" stroke-width="1.3"/>
<rect x="9.6" y="1.6" width="7" height="5.2" rx="1.3" fill="url(#nb)" stroke="#0f3e6c" stroke-width="1.3"/>
<rect x="9.6" y="9.6" width="7" height="5.2" rx="1.3" fill="url(#nb)" stroke="#0f3e6c" stroke-width="1.3"/>
</svg>
<div class="tr" style="top:210px">Lo</div>
<!-- DHCP server -->
<svg class="a" style="left:28px;top:224px" width="20" height="20" viewBox="0 0 20 20">
<defs><linearGradient id="sv" x1="0" y1="0" x2=".6" y2="1"><stop offset="0" stop-color="#c9d6e2"/><stop offset=".5" stop-color="#8ea2b5"/><stop offset="1" stop-color="#5b6f82"/></linearGradient></defs>
<path d="M4 16.5H13.5L12.5 17.3H5Z" fill="#2a3540"/>
<rect x="3.5" y="2.5" width="11" height="13.8" rx="1.2" fill="url(#sv)" stroke="#3b4957" stroke-width="1"/>
<rect x="4.3" y="3.2" width="9.4" height="1.3" fill="#eef2f5"/>
<rect x="4.5" y="4.5" width="8" height="0.8" fill="#4a5866"/>
<rect x="5.2" y="7.3" width="5.8" height="1.4" fill="#3a4652"/>
<circle cx="13.8" cy="6.6" r="1" fill="#3aa0ec"/>
<circle cx="14.2" cy="10" r="1.7" fill="#f0d018"/>
<circle cx="14.2" cy="13.3" r="1.5" fill="#8a2a96"/>
</svg>
<div class="tr" style="top:228px">DHCP</div>
<!-- Budget -->
<svg class="a" style="left:28px;top:242px" width="20" height="20" viewBox="0 0 20 20">
<defs>
<linearGradient id="gold" x1="0" y1="0" x2="1" y2="0"><stop offset="0" stop-color="#7d6714"/><stop offset=".45" stop-color="#e9d77a"/><stop offset="1" stop-color="#6e5a10"/></linearGradient>
<linearGradient id="silv" x1="0" y1="0" x2="1" y2="0"><stop offset="0" stop-color="#8a8a8a"/><stop offset=".4" stop-color="#f6f8f8"/><stop offset=".75" stop-color="#c6c6c6"/><stop offset="1" stop-color="#6d6d6d"/></linearGradient>
</defs>
<rect x="3" y="2.8" width="5" height="8.8" rx="1.8" fill="url(#gold)"/>
<rect x="13.5" y="3.8" width="4.5" height="6.8" rx="1.8" fill="url(#gold)"/>
<rect x="8" y="2" width="5.8" height="13" rx="1.8" fill="url(#silv)"/>
<rect x="10.2" y="8.6" width="6" height="8.2" rx="1.8" fill="url(#silv)" stroke="#d8d8d8" stroke-width=".5"/>
<ellipse cx="5.8" cy="14.6" rx="3.6" ry="2.8" fill="url(#silv)"/>
<path d="M4 16.8L7.5 15.5" stroke="#555" stroke-width=".8"/>
</svg>
<div class="tr" style="top:246px">Budget</div>
<!-- info -->
<svg class="a" style="left:28px;top:260px" width="20" height="20" viewBox="0 0 20 20">
<defs><radialGradient id="ib" cx=".5" cy=".45" r=".6"><stop offset="0" stop-color="#9ccdf4"/><stop offset=".55" stop-color="#3d8fdc"/><stop offset="1" stop-color="#2a72c0"/></radialGradient></defs>
<circle cx="10" cy="9.9" r="6.4" fill="url(#ib)" stroke="#4d5258" stroke-width="1.1"/>
<circle cx="9.9" cy="5.9" r="1.4" fill="#f4f8fc"/>
<path d="M7.6 8.3H10.9V13.2H12V14.3H7.8V13.2H8.9V9.4H7.6Z" fill="#f0f6fc"/>
</svg>
<div class="tr" style="top:264px;letter-spacing:-0.6px">System</div>


<!-- context menu -->
<div class="a" style="left:65px;top:96px;width:383px;height:472px;background:#f0f0f0;border:1px solid #979797;box-shadow:inset 0 0 0 1px #fff"></div>
<div class="a" style="left:68px;top:409px;width:377px;height:22px;border:1px solid #aed0f8;border-radius:3px;background:linear-gradient(#f9fafb 0,#f0f3f8 2px,#e5ecf7 20px);box-shadow:inset 0 1px 0 #fbfcfd"></div>
<div class="a" style="left:94px;top:98px;width:1px;height:311px;background:#e2e3e3"></div>
<div class="a" style="left:94px;top:410px;width:1px;height:20px;background:#e2e3e3;opacity:.7"></div>
<div class="a" style="left:94px;top:431px;width:1px;height:135px;background:#e2e3e3"></div>
<div class="a" style="left:95px;top:98px;width:1px;height:311px;background:#fff"></div>
<div class="a" style="left:95px;top:410px;width:1px;height:20px;background:#fff;opacity:.6"></div>
<div class="a" style="left:95px;top:431px;width:1px;height:135px;background:#fff"></div>

<div class="mi" style="top:104px;letter-spacing:0.042px">Aktualisieren</div><div class="sc" style="top:104px">Strg+F5</div>
<div class="mi" style="top:126px;letter-spacing:-0.117px">Löschen</div><div class="sc" style="top:126px">Entf</div>
<div class="sep" style="top:147px"></div>
<div class="mi" style="top:156px;color:#6d6d6d;letter-spacing:-0.063px">VPN-Verbindungen anzeigen...</div>
<div class="mi" style="top:178px;letter-spacing:-0.132px">Geräteaktivitäten anzeigen...</div>
<div class="mi" style="top:200px;letter-spacing:-0.206px">Syslog anzeigen...</div>
<div class="mi" style="top:222px;letter-spacing:-0.189px">IPv6-Firewall-Ereignisse anzeigen...</div>
<div class="mi" style="top:244px;letter-spacing:-0.189px">IPv4-Firewall-Ereignisse anzeigen...</div>
<div class="mi" style="top:266px;letter-spacing:-0.13px">DHCP-Tabelle anzeigen...</div>
<div class="mi" style="top:288px;letter-spacing:0.123px">Accounting-Informationen anzeigen...</div>
<div class="mi" style="top:310px;letter-spacing:0.084px">Volumenbudget-Archiv anzeigen...</div>
<div class="sep" style="top:331px"></div>
<div class="mi" style="top:340px;letter-spacing:-0.017px">Zeit- und Gebühren-Limits zurücksetzen...</div>
<div class="sep" style="top:361px"></div>
<div class="mi" style="top:370px;letter-spacing:0.05px">Ping...</div>
<div class="mi" style="top:392px;letter-spacing:-0.116px">Trace-Ausgabe erstellen...</div>
<div class="mi" style="top:414px;letter-spacing:-0.188px">Spectral-Scan anzeigen...</div>
<div class="mi" style="top:436px;letter-spacing:0.073px">Punkt-zu-Punkt WLAN-Antennen einrichten...</div>
<div class="sep" style="top:457px"></div>
<div class="mi" style="top:466px;letter-spacing:0.1px">Konfigurieren...</div><div class="sc" style="top:466px">Strg+O</div>
<div class="mi" style="top:488px;letter-spacing:-0.133px">Web-Browser starten...</div><div class="sc" style="top:488px">Strg+B</div>
<div class="sep" style="top:509px"></div>
<div class="mi" style="top:518px;letter-spacing:0.057px">Kopieren</div><div class="sc" style="top:518px">Strg+C</div>
<div class="sep" style="top:539px"></div>
<div class="mi" style="top:548px;letter-spacing:-0.113px">Eigenschaften...</div><div class="sc" style="top:548px">Alt+Enter</div>
</body></html>
